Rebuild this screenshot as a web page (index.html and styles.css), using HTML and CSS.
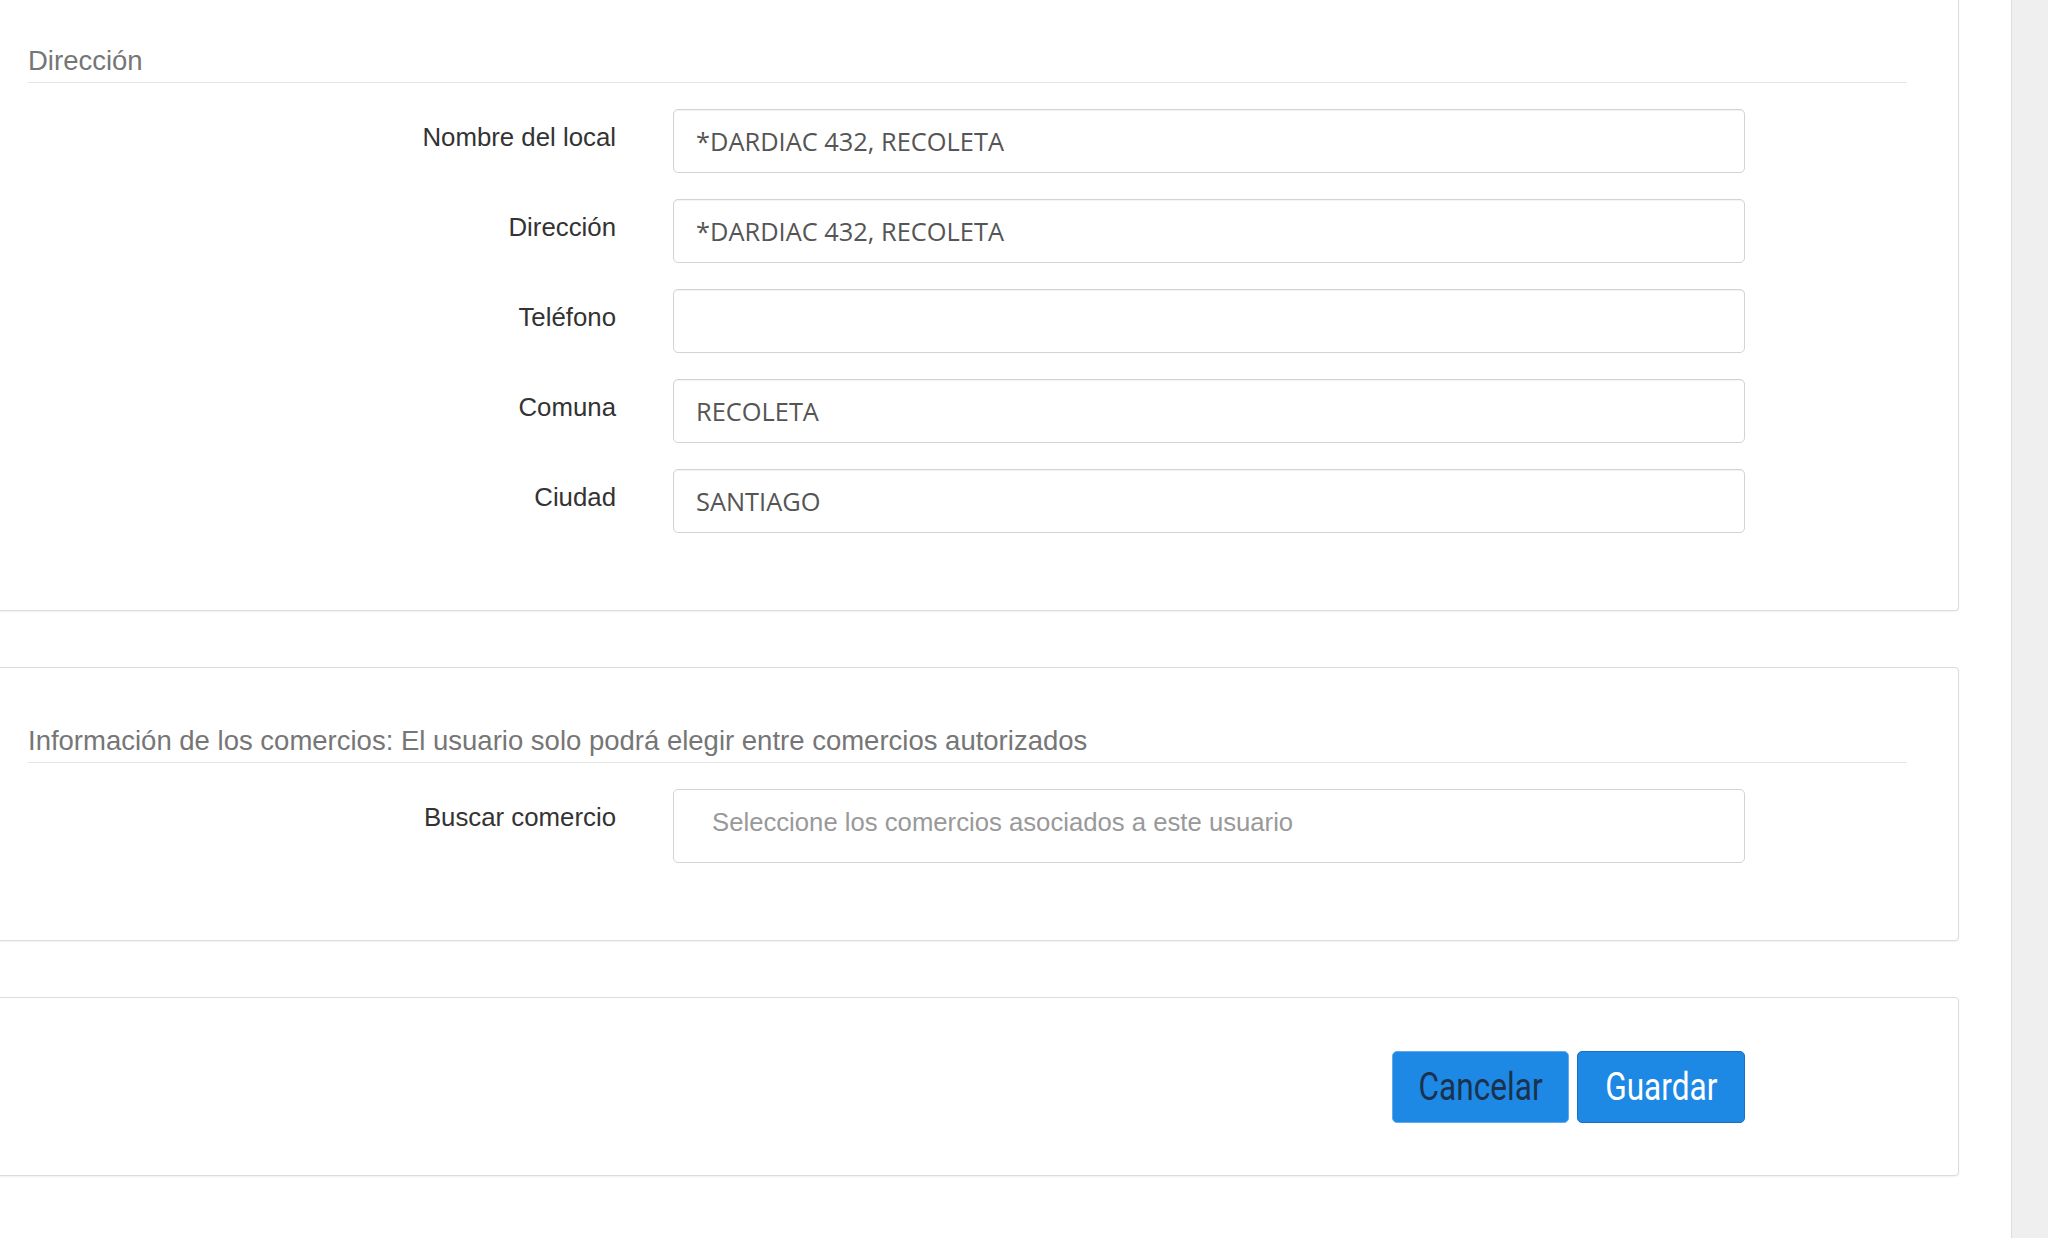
FILE: index.html
```html
<!DOCTYPE html>
<html lang="es">
<head>
<meta charset="utf-8">
<title>Dirección</title>
<link rel="stylesheet" href="styles.css">
</head>
<body>
<div class="page">
  <main class="content">
    <section class="card card-first">
      <h3 class="legend">Dirección</h3>
      <div class="form-row">
        <label class="label">Nombre del local</label>
        <input class="field" type="text" value="*DARDIAC 432, RECOLETA">
      </div>
      <div class="form-row">
        <label class="label">Dirección</label>
        <input class="field" type="text" value="*DARDIAC 432, RECOLETA">
      </div>
      <div class="form-row">
        <label class="label">Teléfono</label>
        <input class="field" type="text" value="">
      </div>
      <div class="form-row">
        <label class="label">Comuna</label>
        <input class="field" type="text" value="RECOLETA">
      </div>
      <div class="form-row">
        <label class="label">Ciudad</label>
        <input class="field" type="text" value="SANTIAGO">
      </div>
    </section>

    <section class="card">
      <h3 class="legend">Información de los comercios: El usuario solo podrá elegir entre comercios autorizados</h3>
      <div class="form-row">
        <label class="label">Buscar comercio</label>
        <div class="multiselect"><span class="placeholder">Seleccione los comercios asociados a este usuario</span></div>
      </div>
    </section>

    <section class="card card-actions">
      <div class="actions-row">
        <div class="actions">
          <button class="btn btn-cancel" type="button"><span class="btn-text">Cancelar</span></button>
          <button class="btn btn-save" type="button"><span class="btn-text">Guardar</span></button>
        </div>
      </div>
    </section>
  </main>
  <aside class="strip"></aside>
</div>
</body>
</html>
```

FILE: styles.css
```css
* { box-sizing: border-box; }

html, body {
  margin: 0;
  padding: 0;
  height: 100%;
  background: #ffffff;
  font-family: "Liberation Sans", Arial, sans-serif;
  overflow: hidden;
}

.page {
  display: flex;
  height: 100vh;
}

.content {
  flex: 1;
  min-width: 0;
}

.strip {
  width: 37px;
  flex: none;
  background: #efefef;
  border-left: 1px solid #dddddd;
}

.card {
  margin: 56px 52px 0 -10px;
  padding: 55px 51px 77px 37px;
  background: #ffffff;
  border: 1px solid #dcdcdc;
  border-radius: 4px;
  box-shadow: 0 1px 2px rgba(0, 0, 0, 0.06);
}

.card-first {
  margin-top: 0;
  padding-top: 43px;
  border-top: 0;
  border-radius: 0 0 4px 4px;
  padding-bottom: 77px;
}

.legend {
  margin: 0 0 26px 0;
  padding: 0 0 3px 0;
  font-family: "Liberation Sans", Arial, sans-serif;
  font-weight: normal;
  font-size: 27.5px;
  line-height: 36px;
  color: #767676;
  border-bottom: 1px solid #e5e5e5;
}

.form-row {
  display: grid;
  grid-template-columns: 588px 1072px;
  column-gap: 57px;
  margin-bottom: 26px;
}

.form-row:last-child {
  margin-bottom: 0;
}

.label {
  text-align: right;
  padding-top: 10px;
  font-size: 25.8px;
  line-height: 36px;
  color: #333333;
}

.field {
  display: block;
  width: 100%;
  height: 64px;
  margin: 0;
  padding: 0 22px;
  font-family: "Open Sans", sans-serif;
  font-size: 25.4px;
  color: #555555;
  background: #ffffff;
  border: 1px solid #d3d3d3;
  border-radius: 5px;
  box-shadow: inset 0 1px 1px rgba(0, 0, 0, 0.05);
  outline: none;
}

.multiselect {
  height: 74px;
  padding: 14px 38px 0 38px;
  border: 1px solid #d3d3d3;
  border-radius: 5px;
  background: #ffffff;
}

.placeholder {
  font-size: 25.7px;
  line-height: 36px;
  color: #999999;
}

.card-actions {
  padding-top: 53px;
  padding-bottom: 52px;
}

.actions-row {
  display: grid;
  grid-template-columns: 588px 1072px;
  column-gap: 57px;
}

.actions {
  grid-column: 2;
  display: flex;
  justify-content: flex-end;
  gap: 8px;
}

.btn {
  height: 72px;
  padding: 0;
  font-family: Roboto, sans-serif;
  font-size: 39px;
  background: #1e88e5;
  border-radius: 5px;
  cursor: pointer;
  display: flex;
  align-items: center;
  justify-content: center;
}

.btn-text {
  display: inline-block;
  transform: scaleX(0.81);
  line-height: 1;
}

.btn-cancel {
  width: 177px;
  color: #1a324d;
  border: 1px solid #63aaec;
}

.btn-save {
  width: 168px;
  color: #ffffff;
  border: 1px solid #1b70c4;
}
```
